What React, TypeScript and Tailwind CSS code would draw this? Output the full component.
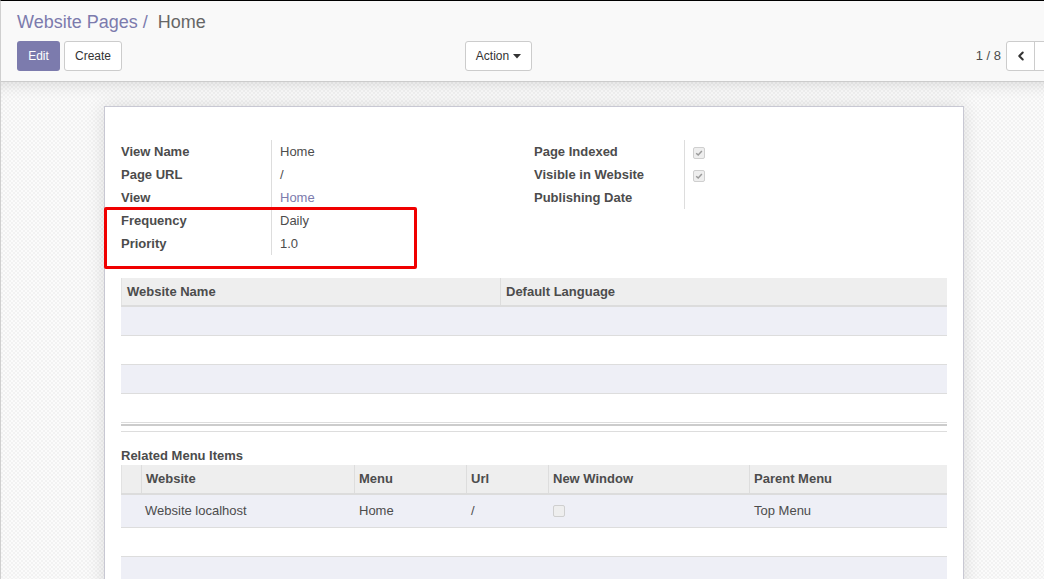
// Formulário "Website Pages / Home" em modo leitura, com a marcação vermelha por cima.
import { ChevronLeft } from "lucide-react";

const LAVANDA = "bg-[#eeeff6]";

function Check({ marcado }: { marcado?: boolean }) {
  return (
    <span className="inline-flex h-[12px] w-[12px] items-center justify-center rounded-[2px] border border-[#cfcfcf] bg-[#eeeeee]">
      {marcado && (
        <svg viewBox="0 0 10 10" className="h-[8px] w-[8px]">
          <path d="M1.5 5.2 L4 7.6 L8.6 2.4" fill="none" stroke="#9a9a9a" strokeWidth="1.8" />
        </svg>
      )}
    </span>
  );
}

function Campo({ rotulo }: { rotulo: string }) {
  return <div className="h-[23px] leading-[23px] font-bold text-[#4c4c4c]">{rotulo}</div>;
}

function Valor({ children, link }: { children?: React.ReactNode; link?: boolean }) {
  return (
    <div className={`flex h-[23px] items-center leading-[23px] ${link ? "text-[#7c7bad]" : "text-[#4c4c4c]"}`}>
      {children}
    </div>
  );
}

export default function App() {
  const colunas = [
    { w: "w-[20px]", t: "" },
    { w: "w-[213px]", t: "Website" },
    { w: "w-[112px]", t: "Menu" },
    { w: "w-[82px]", t: "Url" },
    { w: "w-[201px]", t: "New Window" },
    { w: "w-[198px]", t: "Parent Menu" },
  ];

  return (
    <div className="relative h-[579px] w-[1044px] overflow-hidden border-t border-l border-t-black border-l-[#cfcfcf] font-['Liberation_Sans',Arial,sans-serif] text-[13px] text-[#4c4c4c]">
      <div className="w-[1080px]">
        {/* painel de controle */}
        <div className="border-b border-[#cccccc] bg-[#f9f9f9] px-[16px] pt-[9px] pb-[10px]">
          <div className="h-[24px] text-[18px] leading-[24px]">
            <span className="text-[#7c7bad]">Website Pages</span>
            <span className="text-[#7c7bad]"> /&nbsp; </span>
            <span className="text-[#666666]">Home</span>
          </div>
          <div className="mt-[7px] flex h-[30px] items-center text-[12px]">
            <div className="flex w-[448px] gap-[4px]">
              <button className="h-[30px] w-[43px] rounded-[3px] bg-[#7c7bad] text-white">Edit</button>
              <button className="h-[30px] w-[58px] rounded-[3px] border border-[#cccccc] bg-white text-[#333333]">
                Create
              </button>
            </div>
            <button className="flex h-[30px] w-[67px] items-center justify-center gap-[4px] rounded-[3px] border border-[#cccccc] bg-white text-[#333333]">
              Action
              <svg viewBox="0 0 8 5" className="h-[5px] w-[8px]">
                <path d="M0 0 H8 L4 4.5 Z" fill="#333" />
              </svg>
            </button>
            <div className="flex-1" />
            <span className="mr-[5px] text-[13px] text-[#4c4c4c]">1 / 8</span>
            <div className="flex h-[30px] rounded-[3px] border border-[#cccccc] bg-white">
              <button className="flex w-[28px] items-center justify-center border-r border-[#cccccc] text-[#333]">
                <ChevronLeft size={14} strokeWidth={3.5} />
              </button>
              <button className="w-[29px]" />
            </div>
          </div>
        </div>

        {/* fundo quadriculado com a folha */}
        <div className="h-[600px] bg-[image:repeating-conic-gradient(#f2f2f2_0%_25%,#fbfbfb_0%_50%)] bg-[length:4px_4px] pt-[24px] shadow-[inset_0_14px_16px_-12px_rgba(0,0,0,0.13)]">
          <div className="ml-[103px] w-[860px] border border-[#c8c8d3] bg-white px-[16px] pt-[33px] pb-[40px] shadow-[0_0_18px_rgba(0,0,0,0.12)]">
            <div className="flex">
              <div className="flex w-[413px]">
                <div className="w-[151px] border-r border-[#dddddd]">
                  <Campo rotulo="View Name" />
                  <Campo rotulo="Page URL" />
                  <Campo rotulo="View" />
                  <Campo rotulo="Frequency" />
                  <Campo rotulo="Priority" />
                </div>
                <div className="pl-[8px]">
                  <Valor>Home</Valor>
                  <Valor>/</Valor>
                  <Valor link>Home</Valor>
                  <Valor>Daily</Valor>
                  <Valor>1.0</Valor>
                </div>
              </div>
              <div className="flex self-start">
                <div className="w-[151px] border-r border-[#dddddd]">
                  <Campo rotulo="Page Indexed" />
                  <Campo rotulo="Visible in Website" />
                  <Campo rotulo="Publishing Date" />
                </div>
                <div className="pl-[8px] pt-[1px]">
                  <Valor>
                    <Check marcado />
                  </Valor>
                  <Valor>
                    <Check marcado />
                  </Valor>
                </div>
              </div>
            </div>

            {/* tabela de sites */}
            <div className="mt-[23px]">
              <div className="flex h-[29px] border-b-2 border-[#dcdcdc] bg-[#eeeeee] font-bold">
                <div className="flex w-[379px] items-center border-l border-[#e2e2e2] pl-[5px]">Website Name</div>
                <div className="flex flex-1 items-center border-l border-[#dddddd] pl-[5px]">Default Language</div>
              </div>
              {[0, 1, 2, 3].map((i) => (
                <div key={i} className={`h-[29px] border-b border-[#dddddd] ${i % 2 === 0 ? LAVANDA : "bg-white"}`} />
              ))}
              <div className="mt-[1px] h-[8px] border-t-2 border-b border-t-[#cccccc] border-b-[#dddddd]" />
            </div>

            {/* itens de menu relacionados */}
            <div className="mt-[14px] h-[19px] font-bold leading-[19px]">Related Menu Items</div>
            <div>
              <div className="flex h-[30px] border-b-2 border-[#dcdcdc] bg-[#eeeeee] font-bold">
                {colunas.map((c, i) => (
                  <div
                    key={i}
                    className={`${c.w} flex items-center border-l pl-[4px] ${i === 0 ? "border-[#e2e2e2]" : "border-[#dddddd]"}`}
                  >
                    {c.t}
                  </div>
                ))}
              </div>
              <div className={`flex h-[33px] items-center border-b border-[#dddddd] ${LAVANDA}`}>
                <div className="w-[20px]" />
                <div className="w-[213px] pl-[4px]">Website localhost</div>
                <div className="w-[112px] pl-[5px]">Home</div>
                <div className="w-[82px] pl-[5px]">/</div>
                <div className="flex w-[201px] items-center pl-[5px]">
                  <Check />
                </div>
                <div className="w-[198px] pl-[5px]">Top Menu</div>
              </div>
              <div className="h-[29px] border-b border-[#dddddd] bg-white" />
              <div className={`h-[29px] border-b border-[#dddddd] ${LAVANDA}`} />
            </div>
          </div>
        </div>
      </div>

      {/* marcação vermelha */}
      <div className="absolute top-[206px] left-[103px] h-[62px] w-[313px] rounded-[2px] border-[3px] border-[#f00000]" />
    </div>
  );
}
